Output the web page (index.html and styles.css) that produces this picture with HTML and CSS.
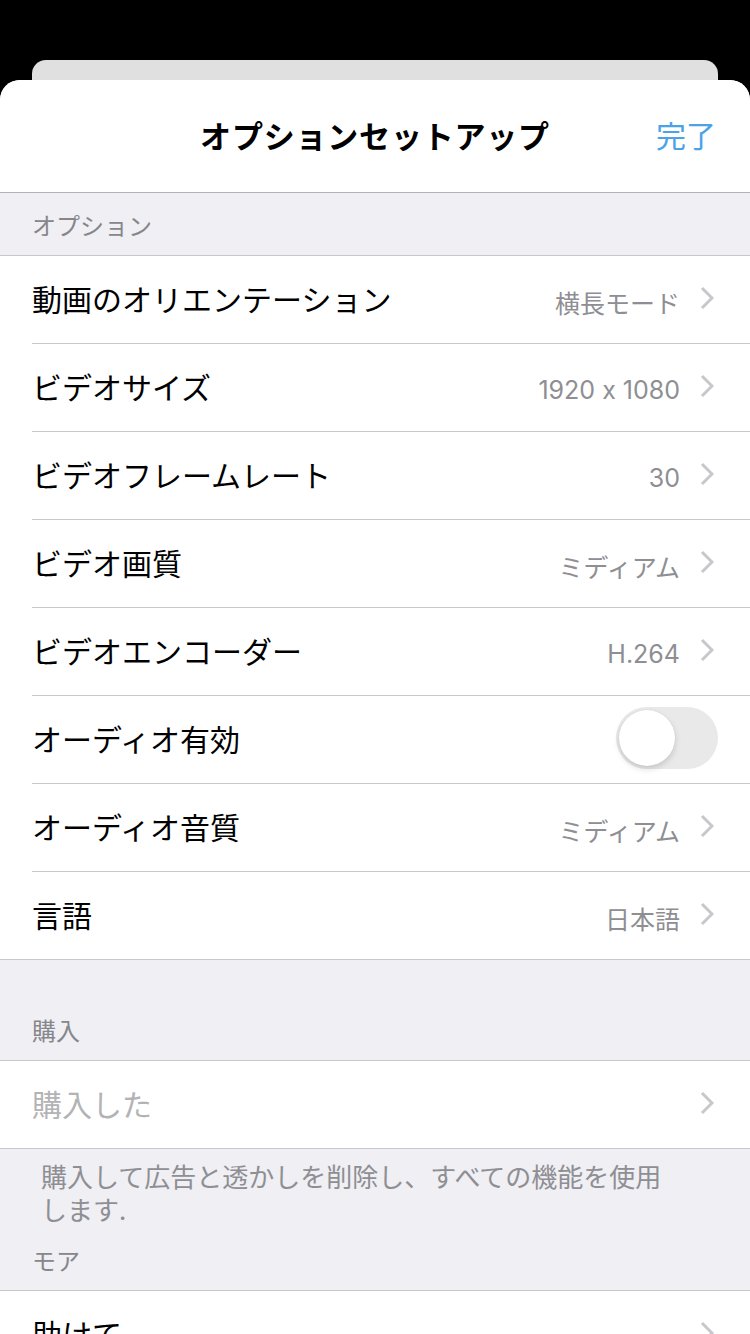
FILE: index.html
```html
<!DOCTYPE html>
<html lang="ja">
<head>
    <meta charset="UTF-8">
    <meta name="viewport" content="width=device-width, initial-scale=1.0">
    <title>オプションセットアップ</title>
    <link rel="stylesheet" href="styles.css">
</head>
<body>

    <div class="back-card"></div>

    <div class="sheet">
        <header class="nav">
            <span></span>
            <h1 class="nav-title">オプションセットアップ</h1>
            <span class="nav-done">完了</span>
        </header>

        <div class="section-title">オプション</div>
        <ul class="group">
            <li class="row">
                <div class="row-inner">
                    <span class="label">動画のオリエンテーション</span>
                    <span class="value">横長モード</span>
                    <svg class="chevron" viewBox="0 0 14 24"><polyline points="2,2 12,12 2,22"/></svg>
                </div>
            </li>
            <li class="row">
                <div class="row-inner">
                    <span class="label">ビデオサイズ</span>
                    <span class="value">1920 x 1080</span>
                    <svg class="chevron" viewBox="0 0 14 24"><polyline points="2,2 12,12 2,22"/></svg>
                </div>
            </li>
            <li class="row">
                <div class="row-inner">
                    <span class="label">ビデオフレームレート</span>
                    <span class="value">30</span>
                    <svg class="chevron" viewBox="0 0 14 24"><polyline points="2,2 12,12 2,22"/></svg>
                </div>
            </li>
            <li class="row">
                <div class="row-inner">
                    <span class="label">ビデオ画質</span>
                    <span class="value">ミディアム</span>
                    <svg class="chevron" viewBox="0 0 14 24"><polyline points="2,2 12,12 2,22"/></svg>
                </div>
            </li>
            <li class="row">
                <div class="row-inner">
                    <span class="label">ビデオエンコーダー</span>
                    <span class="value">H.264</span>
                    <svg class="chevron" viewBox="0 0 14 24"><polyline points="2,2 12,12 2,22"/></svg>
                </div>
            </li>
            <li class="row">
                <div class="row-inner">
                    <span class="label">オーディオ有効</span>
                    <span class="switch"><span class="knob"></span></span>
                </div>
            </li>
            <li class="row">
                <div class="row-inner">
                    <span class="label">オーディオ音質</span>
                    <span class="value">ミディアム</span>
                    <svg class="chevron" viewBox="0 0 14 24"><polyline points="2,2 12,12 2,22"/></svg>
                </div>
            </li>
            <li class="row">
                <div class="row-inner">
                    <span class="label">言語</span>
                    <span class="value">日本語</span>
                    <svg class="chevron" viewBox="0 0 14 24"><polyline points="2,2 12,12 2,22"/></svg>
                </div>
            </li>
        </ul>

        <div class="section-title tall">購入</div>
        <ul class="group">
            <li class="row">
                <div class="row-inner">
                    <span class="label muted">購入した</span>
                    <svg class="chevron" viewBox="0 0 14 24"><polyline points="2,2 12,12 2,22"/></svg>
                </div>
            </li>
        </ul>
        <p class="section-footer">購入して広告と透かしを削除し、すべての機能を使用します.</p>

        <div class="section-title after-footer">モア</div>
        <ul class="group">
            <li class="row">
                <div class="row-inner">
                    <span class="label">助けて</span>
                    <svg class="chevron" viewBox="0 0 14 24"><polyline points="2,2 12,12 2,22"/></svg>
                </div>
            </li>
        </ul>
    </div>

</body>
</html>
```

FILE: styles.css
```css
* {
    box-sizing: border-box;
}
body {
    margin: 0;
    height: 1334px;
    overflow: hidden;
    background-color: #000;
    font-family: "Noto Sans CJK JP", "Noto Sans", sans-serif;
}
.back-card {
    height: 20px;
    margin: 60px 32px 0;
    background-color: #e0e0e0;
    border-radius: 14px 14px 0 0;
}
.sheet {
    height: 1254px;
    background-color: #efeff4;
    border-radius: 20px 20px 0 0;
    overflow: hidden;
}
.nav {
    display: grid;
    grid-template-columns: 1fr auto 1fr;
    align-items: center;
    height: 113px;
    padding: 0 34px 4px;
    background-color: #fff;
    border-bottom: 1px solid #b4b4b4;
}
.nav-title {
    margin: 0;
    font-size: 31px;
    font-weight: bold;
    color: #000;
    letter-spacing: 0.8px;
}
.nav-done {
    justify-self: end;
    font-size: 30px;
    color: #4aa3e8;
}
.section-title {
    display: flex;
    align-items: flex-end;
    height: 62px;
    padding: 0 32px 18px;
    font-size: 24px;
    line-height: 1;
    color: #86868b;
}
.section-title.tall {
    height: 100px;
}
.section-title.after-footer {
    height: 65px;
}
.group {
    list-style: none;
    margin: 0;
    padding: 0;
    background-color: #fff;
    border-top: 1px solid #c8c7cc;
    border-bottom: 1px solid #c8c7cc;
}
.row {
    padding-left: 32px;
}
.row-inner {
    display: flex;
    align-items: center;
    height: 88px;
    padding: 0 36px 3px 0;
    border-bottom: 1px solid #c8c7cc;
}
.row:last-child .row-inner {
    height: 87px;
    border-bottom: none;
}
.label {
    flex: 1;
    font-size: 30px;
    color: #000;
}
.label.muted {
    color: #b3b3b6;
}
.value {
    margin-right: 20px;
    padding-top: 8px;
    font-family: Inter, "Noto Sans CJK JP", sans-serif;
    font-feature-settings: "calt" 0;
    font-size: 25px;
    color: #8e8e93;
}
.chevron {
    width: 14px;
    height: 24px;
    fill: none;
    stroke: #c7c7cc;
    stroke-width: 3;
}
.switch {
    position: relative;
    width: 102px;
    height: 62px;
    margin-right: -4px;
    border-radius: 31px;
    background-color: #e9e9ea;
}
.knob {
    position: absolute;
    top: 3px;
    left: 3px;
    width: 56px;
    height: 56px;
    border-radius: 50%;
    background-color: #fff;
    box-shadow: 0 3px 6px rgba(0, 0, 0, 0.15), 0 0 1px rgba(0, 0, 0, 0.1);
}
.section-footer {
    margin: 0;
    padding: 10px 69px 0 41px;
    font-size: 26px;
    line-height: 33px;
    color: #8e8e93;
}
```
